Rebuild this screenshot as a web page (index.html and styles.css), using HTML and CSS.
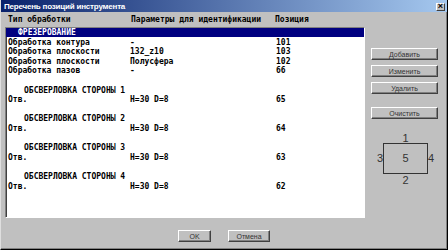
FILE: index.html
```html
<!DOCTYPE html>
<html lang="ru">
  <head>
    <meta charset="UTF-8" />
    <title>Перечень позиций инструмента</title>
    <link rel="stylesheet" href="styles.css">
  </head>
  <body>
    <div class="window">
      <div class="titlebar">
        <span class="title">Перечень позиций инструмента</span>
        <span class="close">×</span>
      </div>

      <div class="main">
        <!-- list of positions -->
        <div class="left">
          <div class="colhead">
            <span>Тип обработки</span>
            <span>Параметры для идентификации</span>
            <span>Позиция</span>
          </div>
          <div class="listbox">
            <div class="row selected"><span class="ind2">ФРЕЗЕРОВАНИЕ</span><span></span><span></span></div>
            <div class="row"><span>Обработка контура</span><span>-</span><span>101</span></div>
            <div class="row"><span>Обработка плоскости</span><span>132_z10</span><span>103</span></div>
            <div class="row"><span>Обработка плоскости</span><span>Полусфера</span><span>102</span></div>
            <div class="row"><span>Обработка пазов</span><span>-</span><span>66</span></div>
            <div class="row"></div>
            <div class="row"><span class="ind3">ОБСВЕРЛОВКА СТОРОНЫ 1</span><span></span><span></span></div>
            <div class="row"><span>Отв.</span><span>H=30 D=8</span><span>65</span></div>
            <div class="row"></div>
            <div class="row"><span class="ind3">ОБСВЕРЛОВКА СТОРОНЫ 2</span><span></span><span></span></div>
            <div class="row"><span>Отв.</span><span>H=30 D=8</span><span>64</span></div>
            <div class="row"></div>
            <div class="row"><span class="ind3">ОБСВЕРЛОВКА СТОРОНЫ 3</span><span></span><span></span></div>
            <div class="row"><span>Отв.</span><span>H=30 D=8</span><span>63</span></div>
            <div class="row"></div>
            <div class="row"><span class="ind3">ОБСВЕРЛОВКА СТОРОНЫ 4</span><span></span><span></span></div>
            <div class="row"><span>Отв.</span><span>H=30 D=8</span><span>62</span></div>
          </div>
        </div>

        <!-- buttons and side diagram -->
        <div class="side">
          <button class="btn">Добавить</button>
          <button class="btn">Изменить</button>
          <button class="btn">Удалить</button>
          <button class="btn clear-btn">Очистить</button>

          <div class="sides">
            <span class="s1">1</span>
            <span class="s3">3</span>
            <span class="box">5</span>
            <span class="s4">4</span>
            <span class="s2">2</span>
          </div>
        </div>
      </div>

      <div class="footer">
        <button class="btn ok-btn">OK</button>
        <button class="btn cancel-btn">Отмена</button>
      </div>
    </div>
  </body>
</html>
```

FILE: styles.css
```css
* {
  margin: 0;
  padding: 0;
  box-sizing: border-box;
}

body {
  width: 448px;
  height: 250px;
  overflow: hidden;
  background: #c0c0c0;
  font-family: "Liberation Sans", Arial, sans-serif;
}

.window {
  width: 448px;
  height: 250px;
  display: flex;
  flex-direction: column;
  background: #c0c0c0;
  border-left: 1px solid #dfdfdf;
  border-right: 1px solid #000;
  border-bottom: 1px solid #000;
  box-shadow: inset -1px -1px 0 #808080;
}

.titlebar {
  height: 12px;
  display: flex;
  align-items: center;
  justify-content: space-between;
  padding: 0 2px 0 3px;
  background: linear-gradient(to right, #08216b, #a5c8ef);
}

.title {
  color: #fff;
  font-weight: bold;
  font-size: 8px;
  letter-spacing: -0.2px;
}

.close {
  width: 9px;
  height: 8px;
  margin-top: 1px;
  background: #c0c0c0;
  border: 1px solid;
  border-color: #fff #404040 #404040 #fff;
  font-size: 9px;
  line-height: 5px;
  text-align: center;
  font-weight: bold;
  color: #000;
}

.main {
  display: flex;
  padding-left: 4px;
}

.left {
  width: 360px;
}

.colhead,
.row {
  display: grid;
  font-family: "DejaVu Sans Mono", "Liberation Mono", monospace;
  font-weight: bold;
  font-size: 8px;
  white-space: pre;
}

.colhead {
  grid-template-columns: 123px 144px 1fr;
  padding: 3px 0 0 3px;
  height: 15px;
  line-height: 10px;
  color: #000;
}

.listbox {
  height: 191px;
  background: #fff;
  border: 1px solid;
  border-color: #808080 #fff #fff #808080;
  box-shadow: inset 1px 1px 0 #404040;
}

.row {
  grid-template-columns: 122px 146px 1fr;
  height: 9.6px;
  line-height: 9.6px;
  padding-left: 2px;
  color: #000;
}

.row.selected {
  background: #000080;
  color: #fff;
  height: 9px;
  margin-bottom: 0.6px;
}

.ind2 {
  padding-left: 10px;
}

.ind3 {
  padding-left: 16px;
}

.side {
  width: 82px;
  padding: 36px 0 0 6px;
  display: flex;
  flex-direction: column;
}

.btn {
  width: 67px;
  height: 12px;
  margin-bottom: 5px;
  background: #c0c0c0;
  border: 1px solid;
  border-color: #fff #404040 #404040 #fff;
  box-shadow: inset -1px -1px 0 #808080;
  font-family: "Liberation Sans", Arial, sans-serif;
  font-size: 7px;
  line-height: 9px;
  color: #333;
}

.clear-btn {
  margin-top: 8px;
}

.sides {
  display: grid;
  grid-template-columns: 6px 45px 6px;
  grid-template-rows: 10px 31px 10px;
  margin: 9px 0 0 6px;
  font-size: 11px;
  color: #333;
  text-align: center;
}

.s1 {
  grid-column: 2;
  grid-row: 1;
  line-height: 10px;
}

.s3 {
  grid-column: 1;
  grid-row: 2;
  line-height: 31px;
}

.box {
  grid-column: 2;
  grid-row: 2;
  border: 1px solid #333;
  line-height: 29px;
}

.s4 {
  grid-column: 3;
  grid-row: 2;
  line-height: 31px;
}

.s2 {
  grid-column: 2;
  grid-row: 3;
  line-height: 12px;
}

.footer {
  display: flex;
  justify-content: center;
  gap: 17px;
  margin-top: 12px;
}

.footer .btn {
  margin: 0;
}

.ok-btn {
  width: 33px;
}

.cancel-btn {
  width: 42px;
}
```
